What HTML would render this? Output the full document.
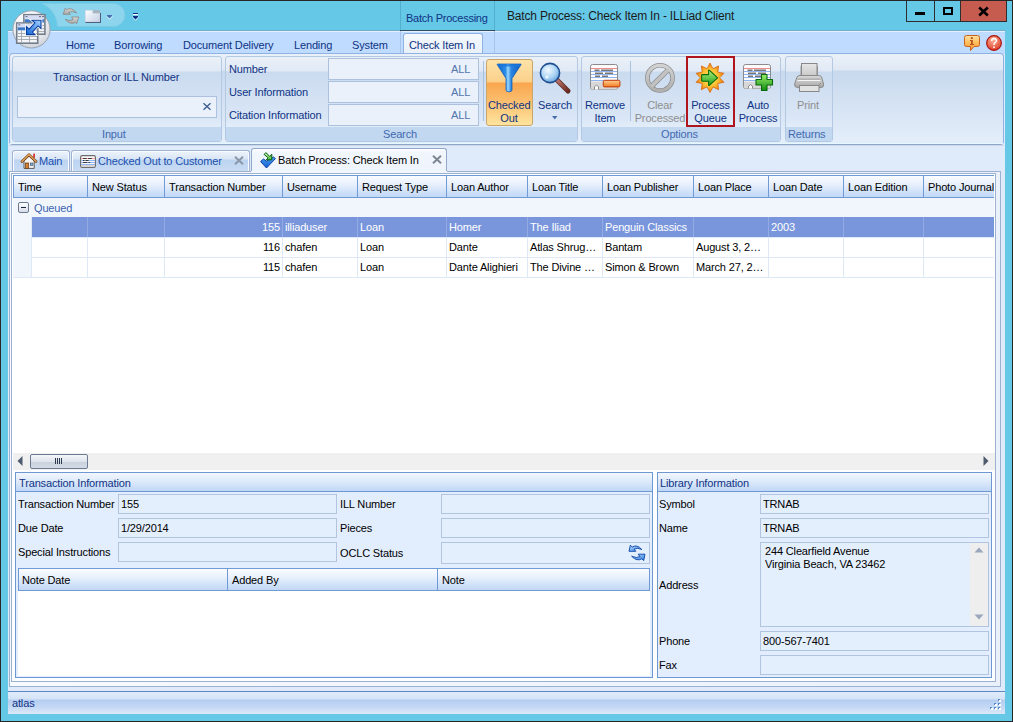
<!DOCTYPE html>
<html><head><meta charset="utf-8">
<style>
*{box-sizing:border-box;margin:0;padding:0}
html,body{width:1013px;height:722px;overflow:hidden;background:#65c8e7}
body{position:relative;font-family:"Liberation Sans",sans-serif;font-size:11px;color:#000}
.a{position:absolute}
.t{position:absolute;white-space:nowrap;line-height:13px;letter-spacing:-0.15px}
.blue{color:#0e3384}
svg{position:absolute;overflow:visible}
</style></head><body>
<!-- window frame -->
<div class="a" style="left:0;top:0;width:1013px;height:722px;border:1px solid #262626;background:#65c8e7"></div>

<!-- TITLE BAR -->
<!-- QAT pill -->
<svg style="left:0;top:0" width="130" height="30" viewBox="0 0 130 30"><path d="M42 3.5 H113.5 A11.5 11.5 0 0 1 113.5 26.5 H57.5 A26 26 0 0 0 42 3.5 Z" fill="#8dd5ed" stroke="#7ccbe6" stroke-width="1"/></svg>

<!-- refresh icon -->
<svg style="left:0;top:0" width="110" height="30" viewBox="0 0 110 30">
 <defs><linearGradient id="rg" x1="0" y1="0" x2="0" y2="1"><stop offset="0" stop-color="#d8d8d8"/><stop offset="1" stop-color="#a8a8a8"/></linearGradient>
 <linearGradient id="fg" x1="0" y1="0" x2="1" y2="1"><stop offset="0" stop-color="#ffffff"/><stop offset="1" stop-color="#c4cee4"/></linearGradient></defs>
 <path d="M63.2 14.3 L65.2 8.2 L66.6 9.6 Q71 6.6 76.6 12.8 Q72 10.6 68.6 12.4 L70.4 14.3 Z" fill="url(#rg)" stroke="#8a8580" stroke-width="0.8" stroke-linejoin="round"/>
 <path d="M78.7 17 L76.6 23.8 L75.2 22.4 Q70.6 25.2 65.2 19.4 Q70 21.6 73.2 19.6 L71.6 17 Z" fill="url(#rg)" stroke="#8a8580" stroke-width="0.8" stroke-linejoin="round"/>
 <path d="M85.5 22.5 H100.5 V13" fill="none" stroke="#2c3e5c" stroke-width="1"/>
 <rect x="93.3" y="10.3" width="6.6" height="3" fill="#a9b0b8"/>
 <path d="M85.2 10.2 H92.8 V13.2 H100 V22 H85.2 Z" fill="url(#fg)" stroke="#b8c4d8" stroke-width="0.5"/>
</svg>
<svg style="left:104px;top:12px" width="12" height="10" viewBox="104 12 12 10"><path d="M106.8 16.2 L109.5 19.2 L112.2 16.2" fill="none" stroke="#ffffff" stroke-width="0.9"/><path d="M107 15 H112 V16 L109.5 18.6 L107 16Z" fill="#4670b0"/></svg>
<!-- customize -->
<svg style="left:130px;top:10px" width="12" height="12" viewBox="130 10 12 12"><rect x="133" y="13" width="5" height="1" fill="#0e2f86"/><rect x="133" y="14" width="5" height="1.2" fill="#f4fbff"/><path d="M132.6 16.8 L135.5 20.2 L138.4 16.8" fill="none" stroke="#ffffff" stroke-width="0.9"/><path d="M133 16 H138 V17 L135.5 19.6 L133 17Z" fill="#0e2f86"/></svg>

<!-- context tab header -->
<div class="a" style="left:400px;top:1px;width:1px;height:30px;background:#52afd0"></div>
<div class="a" style="left:494px;top:1px;width:1px;height:30px;background:#52afd0"></div>
<div class="t" style="left:406px;top:12px;color:#0e3384;letter-spacing:-0.25px">Batch Processing</div>
<div class="t" style="left:507px;top:10px;font-size:12px;color:#1b1b1b;letter-spacing:-0.19px">Batch Process: Check Item In - ILLiad Client</div>

<!-- window buttons -->
<div class="a" style="left:906px;top:1px;width:29px;height:21px;border:1px solid #2e2e2e;border-top:none"></div>
<div class="a" style="left:934px;top:1px;width:27px;height:21px;border:1px solid #2e2e2e;border-top:none"></div>
<div class="a" style="left:960px;top:1px;width:47px;height:21px;border:1px solid #2e2e2e;border-top:none;background:#c65b50"></div>
<div class="a" style="left:915px;top:12px;width:10px;height:3px;background:#000"></div>
<div class="a" style="left:943px;top:7px;width:10px;height:8px;border:2px solid #000"></div>
<svg style="left:978px;top:7px" width="11" height="9" viewBox="0 0 11 9"><path d="M1.2 0.5 L9.8 8.5 M9.8 0.5 L1.2 8.5" stroke="#000" stroke-width="2.6"/></svg>

<!-- CLIENT -->
<div id="client" class="a" style="left:8px;top:30px;width:997px;height:684px;background:#dfeafa"></div>
<!-- RIBBON TAB ROW -->
<div class="a" style="left:8px;top:30px;width:997px;height:1px;background:#74aecf"></div>
<div class="a" style="left:8px;top:31px;width:997px;height:1px;background:#e4f0ff"></div>
<div class="a" style="left:8px;top:32px;width:997px;height:22px;background:#bfdbff"></div>
<div class="a" style="left:400px;top:30px;width:95px;height:1px;background:#2f4d5c"></div>
<div class="a" style="left:400px;top:31px;width:1px;height:22px;background:#a6c4ec"></div><div class="a" style="left:494px;top:31px;width:1px;height:22px;background:#a6c4ec"></div>
<div class="t blue" style="left:66px;top:39px">Home</div>
<div class="t blue" style="left:114px;top:39px">Borrowing</div>
<div class="t blue" style="left:183px;top:39px">Document Delivery</div>
<div class="t blue" style="left:294px;top:39px">Lending</div>
<div class="t blue" style="left:352px;top:39px">System</div>
<!-- active tab -->
<div class="a" style="left:403px;top:33px;width:80px;height:22px;border:1px solid #8db2e3;border-bottom:none;border-radius:3px 3px 0 0;background:linear-gradient(#f4f8fd,#e9f0f9)"></div>
<div class="t blue" style="left:409px;top:39px">Check Item In</div>
<!-- help icons -->
<svg style="left:964px;top:35px" width="16" height="16" viewBox="0 0 16 16">
 <defs><linearGradient id="ig" x1="0" y1="0" x2="0" y2="1"><stop offset="0" stop-color="#ffe0a0"/><stop offset="0.5" stop-color="#ffbd5a"/><stop offset="1" stop-color="#f59428"/></linearGradient></defs>
 <path d="M2.5 0.5 H13.5 Q15.5 0.5 15.5 2.5 V9.5 Q15.5 11.5 13.5 11.5 H10 L6.5 15.5 V11.5 H2.5 Q0.5 11.5 0.5 9.5 V2.5 Q0.5 0.5 2.5 0.5Z" fill="url(#ig)" stroke="#c9621c" stroke-width="1"/>
 <rect x="6.8" y="2.2" width="2" height="1.8" fill="#b8531f"/>
 <path d="M6 5 H8.8 V9 H10 V10 H6 V9 H7 V6 H6Z" fill="#b8531f"/>
</svg>
<svg style="left:986px;top:35px" width="16" height="16" viewBox="0 0 16 16">
 <defs><radialGradient id="hg" cx="0.45" cy="0.3" r="0.7"><stop offset="0" stop-color="#ffb39a"/><stop offset="1" stop-color="#e0402a"/></radialGradient></defs>
 <circle cx="8" cy="8" r="7.4" fill="url(#hg)" stroke="#a8110c" stroke-width="1.1"/>
 <path d="M5.6 6 Q5.8 3.6 8.2 3.6 Q10.6 3.8 10.4 5.8 Q10.2 7.2 8.6 8 Q8 8.4 8 10" fill="none" stroke="#fff" stroke-width="1.5"/>
 <circle cx="8" cy="12.2" r="0.9" fill="#fff"/>
</svg>

<!-- RIBBON BODY -->
<div class="a" style="left:9px;top:53px;width:995px;height:92px;border:1px solid #8db2e3;border-bottom-color:#90a6c6;border-radius:4px;background:linear-gradient(#ebf1f9 0px,#dfe8f4 16px,#c8d9ee 17px,#d3e1f2 45px,#e4eefb 88px)"></div>
<div class="a" style="left:10px;top:143px;width:993px;height:1px;background:#e4f8ff"></div><div class="a" style="left:9px;top:145px;width:995px;height:1px;background:#cbd8ea"></div>
<div class="a" style="left:12px;top:56px;width:210px;height:86px;border:1px solid #b3c8e3;border-radius:3px;background:linear-gradient(#eaf0f8 0px,#e0e9f5 14px,#cbdbef 15px,#d9e6f6 60px,#e3edfa 70px);overflow:hidden"><div class="a" style="left:0;top:70px;width:100%;height:15px;background:#c2d7f0"></div></div>
<div class="t" style="left:102px;top:128px;color:#3f6ab0">Input</div>
<div class="a" style="left:225px;top:56px;width:353px;height:86px;border:1px solid #b3c8e3;border-radius:3px;background:linear-gradient(#eaf0f8 0px,#e0e9f5 14px,#cbdbef 15px,#d9e6f6 60px,#e3edfa 70px);overflow:hidden"><div class="a" style="left:0;top:70px;width:100%;height:15px;background:#c2d7f0"></div></div>
<div class="t" style="left:383px;top:128px;color:#3f6ab0">Search</div>
<div class="a" style="left:581px;top:56px;width:200px;height:86px;border:1px solid #b3c8e3;border-radius:3px;background:linear-gradient(#eaf0f8 0px,#e0e9f5 14px,#cbdbef 15px,#d9e6f6 60px,#e3edfa 70px);overflow:hidden"><div class="a" style="left:0;top:70px;width:100%;height:15px;background:#c2d7f0"></div></div>
<div class="t" style="left:661px;top:128px;color:#3f6ab0">Options</div>
<div class="a" style="left:785px;top:56px;width:48px;height:86px;border:1px solid #b3c8e3;border-radius:3px;background:linear-gradient(#eaf0f8 0px,#e0e9f5 14px,#cbdbef 15px,#d9e6f6 60px,#e3edfa 70px);overflow:hidden"><div class="a" style="left:0;top:70px;width:100%;height:15px;background:#c2d7f0"></div></div>
<div class="t" style="left:788px;top:128px;color:#3f6ab0">Returns</div>

<!-- Input group content -->
<div class="t blue" style="left:53px;top:71px">Transaction or ILL Number</div>
<div class="a" style="left:17px;top:96px;width:200px;height:22px;border:1px solid #abc1de;background:#eaf1fa"></div>
<svg style="left:203px;top:103px" width="8" height="7" viewBox="0 0 8 7"><path d="M0.5 0.3 L7.5 6.7 M7.5 0.3 L0.5 6.7" stroke="#3a5a8c" stroke-width="1.3"/></svg>
<!-- Search group content -->
<div class="t blue" style="left:229px;top:63px">Number</div>
<div class="t blue" style="left:229px;top:86px">User Information</div>
<div class="t blue" style="left:229px;top:109px">Citation Information</div>
<div class="a" style="left:328px;top:58px;width:151px;height:22px;border:1px solid #abc1de;background:#eaf1fa"></div>
<div class="a" style="left:328px;top:81px;width:151px;height:22px;border:1px solid #abc1de;background:#eaf1fa"></div>
<div class="a" style="left:328px;top:104px;width:151px;height:22px;border:1px solid #abc1de;background:#eaf1fa"></div>
<div class="t" style="left:451px;top:63px;color:#5275ad">ALL</div>
<div class="t" style="left:451px;top:86px;color:#5275ad">ALL</div>
<div class="t" style="left:451px;top:109px;color:#5275ad">ALL</div>
<div class="a" style="left:483px;top:61px;width:1px;height:60px;background:#a9c0de"></div>
<!-- checked out button -->
<div class="a" style="left:486px;top:59px;width:47px;height:67px;border:1px solid #c9a56a;border-radius:3px;background:linear-gradient(#fde3a8 0px,#fbd08a 22px,#f9a54e 23px,#fbbd6c 40px,#fee6a0 66px)"></div>


<!-- funnel -->
<svg style="left:494px;top:60px" width="32" height="34" viewBox="494 60 32 34">
 <defs><linearGradient id="fn" x1="0" y1="0" x2="1" y2="0"><stop offset="0" stop-color="#0b62c8"/><stop offset="0.35" stop-color="#2b8ee8"/><stop offset="0.45" stop-color="#9ed8ff"/><stop offset="0.58" stop-color="#2a86e0"/><stop offset="1" stop-color="#0a5ec4"/></linearGradient></defs>
 <path d="M497.2 64.6 Q497 64 497.8 64 H520.6 Q521.4 64 521 64.8 L512 78.5 V90 Q512 91.8 509 91.8 Q506 91.8 506 90 V78.5 Z" fill="url(#fn)" stroke="#0a58b8" stroke-width="0.7"/>
 <path d="M497.8 64.3 H520.6 L519.2 66.6 H499.2 Z" fill="#1a78dc" opacity="0.8"/>
</svg>
<div class="t blue" style="left:488px;top:99px;width:42px;text-align:center">Checked</div>
<div class="t blue" style="left:488px;top:112px;width:42px;text-align:center">Out</div>
<!-- search -->
<svg style="left:539px;top:62px" width="32" height="32" viewBox="0 0 32 32">
 <defs><radialGradient id="lg" cx="0.4" cy="0.35" r="0.7"><stop offset="0" stop-color="#f4fbff"/><stop offset="0.6" stop-color="#a9d2f4"/><stop offset="1" stop-color="#5f9fdc"/></radialGradient>
 <linearGradient id="hd" x1="0" y1="0" x2="1" y2="1"><stop offset="0" stop-color="#c47a70"/><stop offset="1" stop-color="#6b2a22"/></linearGradient></defs>
 <path d="M17.5 17.5 L29 29" stroke="#5a2a22" stroke-width="5" stroke-linecap="round"/>
 <path d="M17.5 17.5 L29 29" stroke="url(#hd)" stroke-width="3.4" stroke-linecap="round"/>
 <circle cx="11" cy="11" r="9.6" fill="url(#lg)" stroke="#1f4f8f" stroke-width="1.6"/>
 <circle cx="8" cy="15" r="1.6" fill="#fff" opacity="0.8"/>
</svg>
<div class="t blue" style="left:538px;top:99px">Search</div>
<svg style="left:552px;top:116px" width="6" height="4" viewBox="0 0 6 4"><path d="M0 0 H5.5 L2.75 3.5Z" fill="#4a6ea8"/></svg>

<!-- remove item -->
<svg style="left:590px;top:64px" width="31" height="27" viewBox="0 0 31 27">
 <rect x="0.5" y="0.5" width="27" height="25" rx="2" fill="#fbfbfb" stroke="#8a8a8a"/>
 <path d="M1 17.5 H27 V24 Q27 25.5 25.5 25.5 H2.5 Q1 25.5 1 24Z" fill="#d8d8d8"/>
 <path d="M4.5 25.5 V22.5 Q6.5 20 8.5 22.5 V25.5" fill="#fff" stroke="#8a8a8a" stroke-width="1"/>
 <rect x="1" y="4" width="26" height="1" fill="#f48a8a"/>
 <rect x="1" y="7" width="26" height="1" fill="#8fb4ef"/>
 <rect x="1" y="10" width="26" height="1" fill="#8fb4ef"/>
 <rect x="1" y="13" width="26" height="1" fill="#8fb4ef"/>
 <rect x="1" y="16" width="26" height="1" fill="#8fb4ef"/>
 <rect x="4.5" y="5.6" width="5" height="1.2" fill="#555"/><rect x="11" y="5.6" width="12" height="1.2" fill="#555"/>
 <rect x="5" y="8.6" width="8" height="1.2" fill="#555"/><rect x="15" y="8.6" width="8" height="1.2" fill="#555"/>
 <rect x="5" y="11.6" width="5" height="1.2" fill="#555"/><rect x="12" y="11.6" width="6" height="1.2" fill="#555"/>
 <defs><linearGradient id="og" x1="0" y1="0" x2="0" y2="1"><stop offset="0" stop-color="#ffd090"/><stop offset="1" stop-color="#f27a20"/></linearGradient></defs>
 <rect x="13.3" y="16.3" width="16.6" height="6.6" rx="1.2" fill="url(#og)" stroke="#c0380c" stroke-width="1"/>
</svg>
<div class="t blue" style="left:584px;top:99px;width:42px;text-align:center">Remove</div>
<div class="t blue" style="left:584px;top:112px;width:42px;text-align:center">Item</div>
<div class="a" style="left:630px;top:61px;width:1px;height:60px;background:#a9c0de"></div>
<!-- clear processed -->
<svg style="left:644px;top:62px" width="32" height="32" viewBox="0 0 32 32">
 <defs><linearGradient id="cg" x1="0" y1="0" x2="0" y2="1"><stop offset="0" stop-color="#d2d2d2"/><stop offset="1" stop-color="#b0b0b0"/></linearGradient></defs>
 <circle cx="16" cy="15.9" r="12.6" fill="none" stroke="#8e8e8e" stroke-width="4.6"/>
 <path d="M7.2 24.6 L24.8 7.2" stroke="#8e8e8e" stroke-width="5"/>
 <circle cx="16" cy="15.9" r="12.6" fill="none" stroke="url(#cg)" stroke-width="3.2"/>
 <path d="M7.6 24.2 L24.4 7.6" stroke="#c2c2c2" stroke-width="3.6"/>
</svg>
<div class="t" style="left:638px;top:99px;width:44px;text-align:center;color:#8f8f8f">Clear</div>
<div class="t" style="left:634px;top:112px;width:52px;text-align:center;color:#8f8f8f">Processed</div>
<!-- process queue -->
<div class="a" style="left:686px;top:56px;width:49px;height:71px;border:2px solid #b0141c"></div>
<svg style="left:694px;top:62px" width="32" height="32" viewBox="0 0 32 32">
 <defs><radialGradient id="sg" cx="0.5" cy="0.5" r="0.5"><stop offset="0" stop-color="#ffe070"/><stop offset="0.6" stop-color="#ffc030"/><stop offset="1" stop-color="#e87810"/></radialGradient>
 <linearGradient id="ag" x1="0" y1="0" x2="0" y2="1"><stop offset="0" stop-color="#aef07a"/><stop offset="1" stop-color="#1ea01e"/></linearGradient></defs>
 <path d="M16.00 1.10 L18.97 6.67 L24.64 3.91 L23.77 10.16 L29.98 11.26 L25.60 15.80 L29.98 20.34 L23.77 21.44 L24.64 27.69 L18.97 24.93 L16.00 30.50 L13.03 24.93 L7.36 27.69 L8.23 21.44 L2.02 20.34 L6.40 15.80 L2.02 11.26 L8.23 10.16 L7.36 3.91 L13.03 6.67Z" fill="url(#sg)" stroke="#d86a10" stroke-width="0.8"/>
 <path d="M8.3 12.6 H14.6 V8.6 Q14.6 7.6 15.6 8.4 L23.6 15.8 L15.6 23.2 Q14.6 24 14.6 23 V19.2 H8.3 Q7.6 19.2 7.6 18.5 V13.3 Q7.6 12.6 8.3 12.6Z" fill="url(#ag)" stroke="#0c6a0c" stroke-width="1.1" stroke-linejoin="round"/>
</svg>
<div class="t blue" style="left:688px;top:99px;width:45px;text-align:center">Process</div>
<div class="t blue" style="left:688px;top:112px;width:45px;text-align:center">Queue</div>
<!-- auto process -->
<svg style="left:743px;top:64px" width="31" height="28" viewBox="0 0 31 28">
 <rect x="0.5" y="0.5" width="27" height="24" rx="2" fill="#fbfbfb" stroke="#8a8a8a"/>
 <path d="M1 17.5 H27 V23 Q27 24.5 25.5 24.5 H2.5 Q1 24.5 1 23Z" fill="#d8d8d8"/>
 <path d="M5.5 24.5 V22 Q7.5 19.5 9.5 22 V24.5" fill="#fff" stroke="#8a8a8a" stroke-width="1"/>
 <rect x="1" y="4" width="26" height="1" fill="#f48a8a"/>
 <rect x="1" y="7" width="26" height="1" fill="#8fb4ef"/>
 <rect x="1" y="10" width="26" height="1" fill="#8fb4ef"/>
 <rect x="1" y="13" width="26" height="1" fill="#8fb4ef"/>
 <rect x="1" y="16" width="26" height="1" fill="#8fb4ef"/>
 <rect x="4.5" y="5.6" width="5" height="1.2" fill="#555"/><rect x="11" y="5.6" width="12" height="1.2" fill="#555"/>
 <rect x="5" y="8.6" width="8" height="1.2" fill="#555"/><rect x="15" y="8.6" width="8" height="1.2" fill="#555"/>
 <rect x="5" y="11.6" width="5" height="1.2" fill="#555"/><rect x="12" y="11.6" width="6" height="1.2" fill="#555"/>
 <defs><linearGradient id="pg" x1="0" y1="0" x2="0" y2="1"><stop offset="0" stop-color="#9cf06a"/><stop offset="1" stop-color="#0f8a12"/></linearGradient></defs>
 <path d="M18.5 10.5 H24 V15.5 H29.5 V21 H24 V26.5 H18.5 V21 H13 V15.5 H18.5Z" fill="url(#pg)" stroke="#0b6a0e" stroke-width="1.1" stroke-linejoin="round"/>
</svg>
<div class="t blue" style="left:737px;top:99px;width:42px;text-align:center">Auto</div>
<div class="t blue" style="left:736px;top:112px;width:44px;text-align:center">Process</div>
<!-- print -->
<svg style="left:790px;top:60px" width="38" height="36" viewBox="790 60 38 36">
 <defs><linearGradient id="pb" x1="0" y1="0" x2="0" y2="1"><stop offset="0" stop-color="#d6d6d6"/><stop offset="0.5" stop-color="#c4c4c4"/><stop offset="1" stop-color="#a4a4a4"/></linearGradient>
 <linearGradient id="pp" x1="0" y1="0" x2="0" y2="1"><stop offset="0" stop-color="#e6e6e6"/><stop offset="1" stop-color="#c6c6c6"/></linearGradient></defs>
 <rect x="800.5" y="66" width="17.5" height="12" fill="#9a9a9a"/>
 <rect x="801.5" y="63.5" width="15.5" height="14" fill="url(#pp)" stroke="#888" stroke-width="1"/>
 <path d="M797 77 Q797.5 75.5 800 75.5 H818.5 Q821 75.5 821.5 77 L823.6 84 Q824 87.6 821 87.6 H797.5 Q794.4 87.6 794.6 84 Z" fill="url(#pb)" stroke="#8a8a8a" stroke-width="1"/>
 <path d="M797.5 80.3 H820.5" stroke="#f4f4f4" stroke-width="1.4"/>
 <path d="M797.5 79.2 H820.5" stroke="#8e8e8e" stroke-width="0.8"/>
 <path d="M819.5 84.5 L820.8 83.2" stroke="#666" stroke-width="0.8"/>
 <rect x="799.5" y="85.5" width="19.5" height="6" fill="#e2e2e2" stroke="#888" stroke-width="1"/>
</svg>
<div class="t" style="left:797px;top:99px;color:#8f8f8f">Print</div>


<!-- WORKSPACE -->
<!-- doc tabs -->
<div class="a" style="left:12px;top:150px;width:58px;height:22px;border:1px solid #9fb3d1;border-bottom:none;border-radius:3px 3px 0 0;box-shadow:inset 1px 1px 0 #fafcff,inset -1px 0 0 #fafcff;background:linear-gradient(#edf3fb 0px,#d9e6f6 8px,#bcd4f1 9px,#c8dbf3 20px)"></div>
<div class="a" style="left:71px;top:150px;width:179px;height:22px;border:1px solid #9fb3d1;border-bottom:none;border-radius:3px 3px 0 0;box-shadow:inset 1px 1px 0 #fafcff,inset -1px 0 0 #fafcff;background:linear-gradient(#edf3fb 0px,#d9e6f6 8px,#bcd4f1 9px,#c8dbf3 20px)"></div>
<div class="a" style="left:251px;top:148px;width:196px;height:25px;border:1px solid #93a8c9;border-bottom:none;border-radius:3px 3px 0 0;background:linear-gradient(#ffffff 0px,#f2f6fd 3px,#eef4fc 24px)"></div>
<div class="t" style="left:39px;top:155px;color:#1b4fae">Main</div>
<div class="t" style="left:98px;top:155px;color:#1b4fae">Checked Out to Customer</div>
<div class="t" style="left:278px;top:154px;color:#000">Batch Process: Check Item In</div>
<svg style="left:234px;top:156px" width="10" height="9" viewBox="0 0 10 9"><path d="M1 0.8 L9 8.2 M9 0.8 L1 8.2" stroke="#8c96a6" stroke-width="2"/></svg>
<svg style="left:432px;top:155px" width="10" height="9" viewBox="0 0 10 9"><path d="M1 0.8 L9 8.2 M9 0.8 L1 8.2" stroke="#7c8492" stroke-width="1.9"/></svg>
<!-- home icon -->
<svg style="left:21px;top:153px" width="16" height="16" viewBox="0 0 16 16">
 <rect x="12.3" y="0.6" width="1.6" height="4.2" fill="#d42020"/>
 <path d="M3 8 V15.4 H13.2 V8 L8 3.2Z" fill="#f4f4f4" stroke="#5a5a5a" stroke-width="1"/>
 <path d="M0.9 8.6 L8 1.6 L15.1 8.6" fill="none" stroke="#7a4210" stroke-width="2.6" stroke-linejoin="round" stroke-linecap="round"/>
 <path d="M0.9 8.6 L8 1.6 L15.1 8.6" fill="none" stroke="#f2b265" stroke-width="1.1" stroke-linecap="round"/>
 <rect x="4.3" y="10" width="3.4" height="5.6" fill="#d08030" stroke="#6a3a10" stroke-width="0.7"/>
 <rect x="9.3" y="10" width="2.6" height="2.6" fill="#7ab6ea" stroke="#4a4a4a" stroke-width="0.6"/>
</svg>
<!-- checked out tab icon -->
<svg style="left:80px;top:155px" width="16" height="13" viewBox="0 0 16 13">
 <rect x="0.6" y="0.6" width="14.8" height="11.8" rx="1.6" fill="#fafafa" stroke="#6e6e6e" stroke-width="1.2"/>
 <rect x="1.2" y="3" width="13.6" height="1" fill="#ff9a9a"/>
 <rect x="1.2" y="5" width="13.6" height="1" fill="#8eb6f8"/>
 <rect x="1.2" y="7" width="13.6" height="1" fill="#8eb6f8"/>
 <rect x="1.2" y="9" width="13.6" height="1" fill="#8eb6f8"/>
 <path d="M3 3.5 H6.8 M8 3.5 H11.8 M3 5.5 H4.5 M5.6 5.5 H8.6 M3 7.5 H7.3 M8.5 7.5 H10.2" stroke="#3c3c3c" stroke-width="1"/>
 <path d="M1.2 10 H14.8 V11.6 H12 V10.8 H10.6 V11.6 H5.4 V10.8 H4 V11.6 H1.2Z" fill="#d4d0cc"/>
</svg>
<!-- batch tab icon -->
<svg style="left:260px;top:152px" width="16" height="17" viewBox="0 0 16 17">
 <defs><linearGradient id="bt" x1="0" y1="0" x2="0" y2="1"><stop offset="0" stop-color="#4aa0f0"/><stop offset="1" stop-color="#1060d0"/></linearGradient>
 <linearGradient id="gt" x1="0" y1="0" x2="1" y2="1"><stop offset="0" stop-color="#d0ffc0"/><stop offset="1" stop-color="#40c030"/></linearGradient></defs>
 <path d="M0.6 9.5 L3.5 7 L6.5 9.2 L13.5 5 L15.4 6.6 L6.5 16 Z" fill="url(#bt)" stroke="#0a3fa8" stroke-width="1" stroke-linejoin="round"/>
 <path d="M4.1 2.4 L5.9 0.6 L9.8 4.5 L11.8 2.2 L11.8 7.8 L6.2 7.8 L8.2 5.9 Z" fill="url(#gt)" stroke="#0a5a10" stroke-width="1" stroke-linejoin="miter"/>
</svg>

<!-- panel frames -->
<div class="a" style="left:9px;top:171px;width:992px;height:516px;border:1px solid #9cb0cf;background:linear-gradient(to right,#f7fafe,#eaf1fb)"></div>
<div class="a" style="left:11px;top:173px;width:985px;height:509px;border:1px solid #9cb0cf;background:#fdfeff"></div>

<div class="a" style="left:251px;top:171px;width:196px;height:2px;background:#f2f6fd"></div>
<!-- GRID -->
<div class="a" style="left:13px;top:175px;width:982px;height:279px;background:#fff;overflow:hidden">
 <div class="a" style="left:0;top:0;width:981px;height:23px;border-top:1px solid #6f9ad5;border-bottom:1px solid #6f9ad5;border-left:1px solid #6f9ad5;background:linear-gradient(#fafcff 0%,#e8f0fc 40%,#d0e2f9 75%,#c2d8f6 100%)"></div>
 <div class="a" style="left:0;top:23px;width:981px;height:19px;background:#f1f6fd"></div>
 <div class="a" style="left:0;top:42px;width:18px;height:60px;background:#f1f6fd"></div>
 <div class="a" style="left:18px;top:42px;width:963px;height:20px;background:#7996dc"></div>
 <div class="a" style="left:18px;top:82px;width:963px;height:1px;background:#dfe8f6"></div>
 <div class="a" style="left:18px;top:62px;width:963px;height:1px;background:#dfe8f6"></div>
 <div class="a" style="left:0;top:102px;width:981px;height:1px;background:#dfe8f6"></div>
</div>
<div class="t" style="left:18px;top:181px">Time</div>
<div class="a" style="left:87px;top:176px;width:1px;height:21px;background:#6f9ad5"></div>
<div class="a" style="left:87px;top:217px;width:1px;height:60px;background:#dfe8f6"></div>
<div class="t" style="left:92px;top:181px">New Status</div>
<div class="a" style="left:164px;top:176px;width:1px;height:21px;background:#6f9ad5"></div>
<div class="a" style="left:164px;top:217px;width:1px;height:60px;background:#dfe8f6"></div>
<div class="t" style="left:169px;top:181px">Transaction Number</div>
<div class="a" style="left:282px;top:176px;width:1px;height:21px;background:#6f9ad5"></div>
<div class="a" style="left:282px;top:217px;width:1px;height:60px;background:#dfe8f6"></div>
<div class="t" style="left:287px;top:181px">Username</div>
<div class="a" style="left:357px;top:176px;width:1px;height:21px;background:#6f9ad5"></div>
<div class="a" style="left:357px;top:217px;width:1px;height:60px;background:#dfe8f6"></div>
<div class="t" style="left:362px;top:181px">Request Type</div>
<div class="a" style="left:446px;top:176px;width:1px;height:21px;background:#6f9ad5"></div>
<div class="a" style="left:446px;top:217px;width:1px;height:60px;background:#dfe8f6"></div>
<div class="t" style="left:451px;top:181px">Loan Author</div>
<div class="a" style="left:527px;top:176px;width:1px;height:21px;background:#6f9ad5"></div>
<div class="a" style="left:527px;top:217px;width:1px;height:60px;background:#dfe8f6"></div>
<div class="t" style="left:532px;top:181px">Loan Title</div>
<div class="a" style="left:602px;top:176px;width:1px;height:21px;background:#6f9ad5"></div>
<div class="a" style="left:602px;top:217px;width:1px;height:60px;background:#dfe8f6"></div>
<div class="t" style="left:607px;top:181px">Loan Publisher</div>
<div class="a" style="left:693px;top:176px;width:1px;height:21px;background:#6f9ad5"></div>
<div class="a" style="left:693px;top:217px;width:1px;height:60px;background:#dfe8f6"></div>
<div class="t" style="left:698px;top:181px">Loan Place</div>
<div class="a" style="left:768px;top:176px;width:1px;height:21px;background:#6f9ad5"></div>
<div class="a" style="left:768px;top:217px;width:1px;height:60px;background:#dfe8f6"></div>
<div class="t" style="left:773px;top:181px">Loan Date</div>
<div class="a" style="left:843px;top:176px;width:1px;height:21px;background:#6f9ad5"></div>
<div class="a" style="left:843px;top:217px;width:1px;height:60px;background:#dfe8f6"></div>
<div class="t" style="left:848px;top:181px">Loan Edition</div>
<div class="a" style="left:923px;top:176px;width:1px;height:21px;background:#6f9ad5"></div>
<div class="a" style="left:923px;top:217px;width:1px;height:60px;background:#dfe8f6"></div>
<div class="t" style="left:928px;top:181px">Photo Journal</div>
<div class="a" style="left:31px;top:217px;width:1px;height:60px;background:#dfe8f6"></div>
<div class="a" style="left:87px;top:217px;width:1px;height:20px;background:#93abe3"></div>
<div class="a" style="left:164px;top:217px;width:1px;height:20px;background:#93abe3"></div>
<div class="a" style="left:282px;top:217px;width:1px;height:20px;background:#93abe3"></div>
<div class="a" style="left:357px;top:217px;width:1px;height:20px;background:#93abe3"></div>
<div class="a" style="left:446px;top:217px;width:1px;height:20px;background:#93abe3"></div>
<div class="a" style="left:527px;top:217px;width:1px;height:20px;background:#93abe3"></div>
<div class="a" style="left:602px;top:217px;width:1px;height:20px;background:#93abe3"></div>
<div class="a" style="left:693px;top:217px;width:1px;height:20px;background:#93abe3"></div>
<div class="a" style="left:768px;top:217px;width:1px;height:20px;background:#93abe3"></div>
<div class="a" style="left:843px;top:217px;width:1px;height:20px;background:#93abe3"></div>
<div class="a" style="left:923px;top:217px;width:1px;height:20px;background:#93abe3"></div>
<div class="a" style="left:994px;top:175px;width:1px;height:279px;background:#fff"></div>
<!-- group row -->
<div class="a" style="left:18px;top:202px;width:11px;height:11px;border:1px solid #6c7a90;border-radius:2px;background:linear-gradient(#ffffff,#d6dde8)"></div>
<div class="a" style="left:21px;top:207px;width:5px;height:1px;background:#1d2a40"></div>
<div class="t" style="left:34px;top:202px;color:#3b62b0">Queued</div>
<div class="t" style="left:164px;top:221px;width:116px;text-align:right;color:#ffffff">155</div>
<div class="t" style="left:285px;top:221px;color:#ffffff">illiaduser</div>
<div class="t" style="left:360px;top:221px;color:#ffffff">Loan</div>
<div class="t" style="left:449px;top:221px;color:#ffffff">Homer</div>
<div class="t" style="left:530px;top:221px;color:#ffffff">The Iliad</div>
<div class="t" style="left:605px;top:221px;color:#ffffff">Penguin Classics</div>
<div class="t" style="left:771px;top:221px;color:#ffffff">2003</div>
<div class="t" style="left:164px;top:241px;width:116px;text-align:right;color:#000000">116</div>
<div class="t" style="left:285px;top:241px;color:#000000">chafen</div>
<div class="t" style="left:360px;top:241px;color:#000000">Loan</div>
<div class="t" style="left:449px;top:241px;color:#000000">Dante</div>
<div class="t" style="left:530px;top:241px;color:#000000">Atlas Shrug…</div>
<div class="t" style="left:605px;top:241px;color:#000000">Bantam</div>
<div class="t" style="left:696px;top:241px;color:#000000">August 3, 2…</div>
<div class="t" style="left:164px;top:261px;width:116px;text-align:right;color:#000000">115</div>
<div class="t" style="left:285px;top:261px;color:#000000">chafen</div>
<div class="t" style="left:360px;top:261px;color:#000000">Loan</div>
<div class="t" style="left:449px;top:261px;color:#000000">Dante Alighieri</div>
<div class="t" style="left:530px;top:261px;color:#000000">The Divine …</div>
<div class="t" style="left:605px;top:261px;color:#000000">Simon &amp; Brown</div>
<div class="t" style="left:696px;top:261px;color:#000000">March 27, 2…</div>

<!-- h scrollbar -->
<div class="a" style="left:13px;top:453px;width:982px;height:17px;background:#f0f0f0"></div>
<svg style="left:17px;top:456px" width="6" height="10" viewBox="0 0 6 10"><path d="M5.5 0 V10 L0.5 5Z" fill="#4e5a6e"/></svg>
<svg style="left:983px;top:456px" width="6" height="10" viewBox="0 0 6 10"><path d="M0.5 0 V10 L5.5 5Z" fill="#4e5a6e"/></svg>
<div class="a" style="left:30px;top:454px;width:58px;height:15px;border:1px solid #6c7a92;border-radius:2px;background:linear-gradient(#f4f6f9,#dfe4ec 50%,#c9d1dd 51%,#d5dbe5)"></div>
<div class="a" style="left:55px;top:458px;width:1px;height:6px;background:#2e3a50;box-shadow:2px 0 0 #2e3a50,4px 0 0 #2e3a50,6px 0 0 #2e3a50"></div>


<!-- DETAILS -->
<div class="a" style="left:15px;top:472px;width:638px;height:206px;border:1px solid #6f98d2;background:#e2edfd"></div>
<div class="a" style="left:16px;top:473px;width:636px;height:19px;border-bottom:1px solid #6f98d2;background:linear-gradient(#f2f7fe,#dce9fa 50%,#bfd7f6)"></div>
<div class="t" style="left:19px;top:477px;color:#0e3384">Transaction Information</div>
<div class="t" style="left:18px;top:498px">Transaction Number</div>
<div class="t" style="left:18px;top:522px">Due Date</div>
<div class="t" style="left:18px;top:546px">Special Instructions</div>
<div class="a" style="left:118px;top:494px;width:219px;height:20px;border:1px solid #b3c5de;background:#e4effd"></div>
<div class="a" style="left:118px;top:518px;width:219px;height:20px;border:1px solid #b3c5de;background:#e4effd"></div>
<div class="a" style="left:118px;top:542px;width:219px;height:20px;border:1px solid #b3c5de;background:#e4effd"></div>
<div class="t" style="left:121px;top:498px">155</div>
<div class="t" style="left:121px;top:522px">1/29/2014</div>
<div class="t" style="left:340px;top:498px">ILL Number</div>
<div class="t" style="left:340px;top:522px">Pieces</div>
<div class="t" style="left:340px;top:547px">OCLC Status</div>
<div class="a" style="left:441px;top:494px;width:209px;height:20px;border:1px solid #b3c5de;background:#e4effd"></div>
<div class="a" style="left:441px;top:518px;width:209px;height:20px;border:1px solid #b3c5de;background:#e4effd"></div>
<div class="a" style="left:441px;top:542px;width:209px;height:22px;border:1px solid #b3c5de;background:#e4effd"></div>
<svg style="left:628px;top:544px" width="18" height="18" viewBox="0 0 18 18">
 <defs><linearGradient id="sy" x1="0" y1="0" x2="1" y2="1"><stop offset="0" stop-color="#bfe2ff"/><stop offset="1" stop-color="#2a78d8"/></linearGradient></defs>
 <path d="M1 7.3 L2.3 1.2 L4.2 3 Q9 0 13.8 5.5 Q9.5 3.2 6 5.2 L7.8 7.3 Z" fill="url(#sy)" stroke="#0b42a8" stroke-width="0.9" stroke-linejoin="round"/>
 <path d="M17 10.2 L15.7 16.6 L13.8 14.8 Q9 17.8 3.6 12.2 Q8.5 14.6 12 12.6 L10.2 10.2 Z" fill="url(#sy)" stroke="#0b42a8" stroke-width="0.9" stroke-linejoin="round"/>
</svg>
<!-- note grid -->
<div class="a" style="left:18px;top:590px;width:632px;height:86px;background:#fff"></div>
<div class="a" style="left:18px;top:568px;width:632px;height:23px;border:1px solid #6f9ad5;background:linear-gradient(#fafcff 0%,#e8f0fc 40%,#d0e2f9 75%,#c2d8f6 100%)"></div>
<div class="a" style="left:227px;top:569px;width:1px;height:21px;background:#6f9ad5"></div>
<div class="a" style="left:437px;top:569px;width:1px;height:21px;background:#6f9ad5"></div>
<div class="t" style="left:22px;top:574px">Note Date</div>
<div class="t" style="left:232px;top:574px">Added By</div>
<div class="t" style="left:442px;top:574px">Note</div>

<div class="a" style="left:657px;top:472px;width:335px;height:206px;border:1px solid #6f98d2;background:#e2edfd"></div>
<div class="a" style="left:658px;top:473px;width:333px;height:19px;border-bottom:1px solid #6f98d2;background:linear-gradient(#f2f7fe,#dce9fa 50%,#bfd7f6)"></div>
<div class="t" style="left:660px;top:477px;color:#0e3384">Library Information</div>
<div class="t" style="left:659px;top:498px">Symbol</div>
<div class="t" style="left:659px;top:522px">Name</div>
<div class="t" style="left:659px;top:579px">Address</div>
<div class="t" style="left:659px;top:635px">Phone</div>
<div class="t" style="left:659px;top:659px">Fax</div>
<div class="a" style="left:760px;top:494px;width:229px;height:20px;border:1px solid #b3c5de;background:#e4effd"></div>
<div class="a" style="left:760px;top:518px;width:229px;height:20px;border:1px solid #b3c5de;background:#e4effd"></div>
<div class="a" style="left:760px;top:542px;width:229px;height:85px;border:1px solid #b3c5de;background:#e4effd"></div>
<div class="a" style="left:970px;top:543px;width:18px;height:83px;background:#eeeeee"></div>
<svg style="left:974px;top:547px" width="10" height="6" viewBox="0 0 10 6"><path d="M0.5 5.5 H9.5 L5 0.5Z" fill="#9aa6bc"/></svg>
<svg style="left:974px;top:614px" width="10" height="6" viewBox="0 0 10 6"><path d="M0.5 0.5 H9.5 L5 5.5Z" fill="#9aa6bc"/></svg>
<div class="a" style="left:760px;top:631px;width:229px;height:20px;border:1px solid #b3c5de;background:#e4effd"></div>
<div class="a" style="left:760px;top:655px;width:229px;height:20px;border:1px solid #b3c5de;background:#e4effd"></div>
<div class="t" style="left:763px;top:498px">TRNAB</div>
<div class="t" style="left:763px;top:522px">TRNAB</div>
<div class="t" style="left:765px;top:545px">244 Clearfield Avenue</div>
<div class="t" style="left:765px;top:558px">Virginia Beach, VA 23462</div>
<div class="t" style="left:763px;top:635px">800-567-7401</div>

<!-- STATUS BAR -->
<div class="a" style="left:8px;top:691px;width:997px;height:23px;border-top:1px solid #5f87c2;background:linear-gradient(#e0ecfa 0px,#d4e3f7 7px,#b4cdf0 8px,#c4d8f4 15px,#dce8f9 22px)"></div>
<div class="t" style="left:12px;top:697px;color:#0e3384">atlas</div>
<svg style="left:990px;top:699px" width="12" height="12" viewBox="0 0 12 12"><rect x="9" y="1" width="2" height="2" fill="#ffffff"/><path d="M8 0 H10 V1 H9 V2 H8 Z" fill="#5a88cc"/><rect x="5" y="5" width="2" height="2" fill="#ffffff"/><path d="M4 4 H6 V5 H5 V6 H4 Z" fill="#5a88cc"/><rect x="9" y="5" width="2" height="2" fill="#ffffff"/><path d="M8 4 H10 V5 H9 V6 H8 Z" fill="#5a88cc"/><rect x="1" y="9" width="2" height="2" fill="#ffffff"/><path d="M0 8 H2 V9 H1 V10 H0 Z" fill="#5a88cc"/><rect x="5" y="9" width="2" height="2" fill="#ffffff"/><path d="M4 8 H6 V9 H5 V10 H4 Z" fill="#5a88cc"/><rect x="9" y="9" width="2" height="2" fill="#ffffff"/><path d="M8 8 H10 V9 H9 V10 H8 Z" fill="#5a88cc"/></svg>

<!-- orb -->
<svg style="left:0;top:0" width="60" height="55" viewBox="0 0 60 55">
 <defs><radialGradient id="ob" cx="0.4" cy="0.25" r="0.85"><stop offset="0" stop-color="#ffffff"/><stop offset="0.55" stop-color="#eef0f3"/><stop offset="0.85" stop-color="#d2d7de"/><stop offset="1" stop-color="#aeb6c0"/></radialGradient>
 <linearGradient id="arw" x1="0" y1="1" x2="1" y2="0"><stop offset="0" stop-color="#1466d8"/><stop offset="1" stop-color="#a6d2ff"/></linearGradient></defs>
 <circle cx="31.5" cy="29.4" r="18.6" fill="url(#ob)" stroke="#9aa3ae" stroke-width="1"/>
 <g transform="translate(12,10)">
 <rect x="11.9" y="4.7" width="21" height="19.5" fill="#eef0f4" stroke="#737d8a" stroke-width="1.6"/>
 <rect x="12.6" y="5.4" width="19.6" height="3.4" fill="#d5dcf4"/>
 <path d="M13.5 6.6 H15.5 M27 6.6 H29 M30 6.6 H32" stroke="#5a6070" stroke-width="0.9"/>
 <rect x="13" y="9.3" width="19" height="3.2" fill="#3c78c8"/>
 <path d="M13 15.5 H32 M13 18.5 H32 M13 21.5 H32" stroke="#a0a6ae" stroke-width="0.9"/>
 <rect x="4.7" y="13" width="21" height="20.2" fill="#f4f5f7" stroke="#737d8a" stroke-width="1.6"/>
 <rect x="5.4" y="13.7" width="19.6" height="3.2" fill="#d5dcf4"/>
 <path d="M6.3 14.9 H8.3" stroke="#5a6070" stroke-width="0.9"/>
 <rect x="5.8" y="17.3" width="19" height="3" fill="#3c78c8"/>
 <path d="M5.8 23.5 H25 M5.8 26.5 H25 M5.8 29.5 H25 M9.5 20.3 V32.6 M17.5 26.5 V32.6" stroke="#a0a6ae" stroke-width="0.9"/>
 <path d="M20 10.3 L29 10.3 L29 18.5 L26.1 15.9 L20.4 22.1 L23 24.6 L14.5 24.6 L14.5 16.5 L17.1 19.1 L22.9 12.9 Z" fill="none" stroke="#ffffff" stroke-width="2.6" stroke-linejoin="miter"/>
 <path d="M20 10.3 L29 10.3 L29 18.5 L26.1 15.9 L20.4 22.1 L23 24.6 L14.5 24.6 L14.5 16.5 L17.1 19.1 L22.9 12.9 Z" fill="url(#arw)" stroke="#0b3d9e" stroke-width="1.1" stroke-linejoin="miter"/>
 </g>
</svg>
</body></html>
